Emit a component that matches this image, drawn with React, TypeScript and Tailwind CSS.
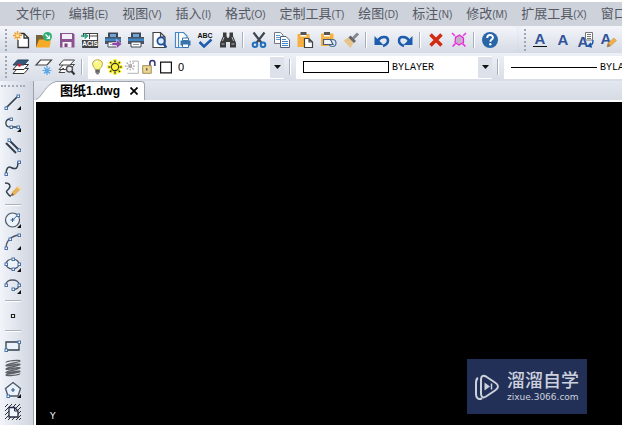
import type { ReactNode } from "react";

const MENUS = [
  { label: "文件", hotkey: "F" },
  { label: "编辑", hotkey: "E" },
  { label: "视图", hotkey: "V" },
  { label: "插入", hotkey: "I" },
  { label: "格式", hotkey: "O" },
  { label: "定制工具", hotkey: "T" },
  { label: "绘图", hotkey: "D" },
  { label: "标注", hotkey: "N" },
  { label: "修改", hotkey: "M" },
  { label: "扩展工具", hotkey: "X" },
  { label: "窗口", hotkey: "W" },
];

type Tool = { name: string; icon: ReactNode; flyout?: boolean };

// ─── Standard toolbar ─────────────────────────────────────────────────────────

const printer = (
  <>
    <path d="M5 2.500h10V7H5z" fill="#3d4654" />
    <path d="M7 4h6v3H7z" fill="#6ea4d8" />
    <path d="M2 7h16v7H2z" fill="#4a5360" />
    <path d="M2 8.500h16v2.500H2z" fill="#3f86c8" />
    <path d="M5 12h10v5H5z" fill="#fff" stroke="#3d4654" />
    <path d="M7 14.500h6" stroke="#8a94a4" />
  </>
);

const FILE_TOOLS: Tool[] = [
  {
    name: "新建",
    icon: (
      <>
        <path d="M7 10v7.500h10.500V8L13 3.500H9.500M13 3.500V8h4.500" fill="#fff" stroke="#333" strokeWidth="1.300" />
        <path d="M6.500 1v9M2 5.500h9M3.500 2.500l6 6M9.500 2.500l-6 6" stroke="#f0a030" strokeWidth="1.300" />
        <circle cx="6.500" cy="5.500" r="1.500" fill="#ffe9a0" />
      </>
    ),
  },
  {
    name: "打开",
    icon: (
      <>
        <path d="M2 17V5h6l2 2h5v10z" fill="#7a6238" />
        <path d="M2 17.500L5 9.500h12l-1.500 8z" fill="#f7a928" />
        <circle cx="13.500" cy="6.500" r="4.500" fill="#2fae74" />
        <path d="M11.500 4.500l4 4M12.500 8.500h3v-3" stroke="#fff" strokeWidth="1.200" fill="none" />
      </>
    ),
  },
  {
    name: "保存",
    icon: (
      <>
        <path d="M3 3h13l1.500 1.500V17.500H3z" fill="#8a5490" />
        <path d="M5 4h10v5H5z" fill="#f4eef6" />
        <path d="M5.500 12h9v5.500h-9z" fill="#f4eef6" />
        <path d="M7.500 13.500h3V17h-3z" fill="#75437d" />
      </>
    ),
  },
  {
    name: "ACIS",
    icon: (
      <>
        <path d="M3.500 7V3.500H17.500V17.500H3V11" fill="#fff" stroke="#444" strokeWidth="1.200" />
        <path d="M9.500 3.500V9M9.500 6h8" stroke="#444" />
        <path d="M1 6h5M4.500 3.500L7.500 6l-3 2.500" stroke="#2a9a78" strokeWidth="1.500" fill="none" />
        <path d="M2 10h16v7.500H2z" fill="#444" />
        <text x="10" y="16.200" fontSize="6.500" fontWeight="700" textAnchor="middle" fill="#fff">ACIS</text>
      </>
    ),
  },
  {
    name: "批量打印",
    icon: (
      <>
        {printer}
        <path d="M9 12.500h4.500v-3l5.500 4.500-5.500 4.500v-3H9z" fill="#8d49a8" stroke="#fff" strokeWidth=".5" />
      </>
    ),
  },
  { name: "打印", icon: printer },
  {
    name: "打印预览",
    icon: (
      <>
        <path d="M4 2.500h7.500L16 7v10.500H4zM11.500 2.500V7H16" fill="#fff" stroke="#444" strokeWidth="1.200" />
        <circle cx="12" cy="11" r="3.600" fill="#dcecff" stroke="#1e4f9c" strokeWidth="1.800" />
        <path d="M14.500 14l3 3.500" stroke="#1e4f9c" strokeWidth="2" />
      </>
    ),
  },
  {
    name: "页面设置",
    icon: (
      <>
        <path d="M3.500 2.500h8L15 6v11.500H3.500zM6.500 2.500v15" fill="#fff" stroke="#4788c0" strokeWidth="1.200" />
        <path d="M8.500 10.500h10v5h-10z" fill="#3974ad" />
        <path d="M10.500 8h6v2.500h-6zM10.500 14h6v3.500h-6z" fill="#fff" stroke="#3974ad" />
      </>
    ),
  },
  {
    name: "拼写检查",
    icon: (
      <>
        <text x="10" y="8" fontSize="7" fontWeight="700" textAnchor="middle" fill="#111">ABC</text>
        <path d="M4.500 12l4.500 4.500 7.500-7" stroke="#1d5cad" strokeWidth="2.500" fill="none" />
      </>
    ),
  },
  {
    name: "查找",
    icon: (
      <>
        <path d="M5 2.500h3.500V6l1 2h1l1-2V2.500H15V6l3 7v4.500h-6V12H8v5.500H2V13l3-7z" fill="#3b3b3b" />
        <path d="M3.500 14h3M13.500 14h3M6 7l-1.500 4M14 7l1.500 4" stroke="#b5b8bd" />
      </>
    ),
  },
];

const EDIT_TOOLS: Tool[] = [
  {
    name: "剪切",
    icon: (
      <>
        <path d="M4.500 2.500l8.500 11M15.500 2.500L7 13.500" stroke="#3e4854" strokeWidth="2.200" />
        <circle cx="6" cy="14.800" r="2.300" fill="none" stroke="#2170bd" strokeWidth="2" />
        <circle cx="14" cy="14.800" r="2.300" fill="none" stroke="#2170bd" strokeWidth="2" />
      </>
    ),
  },
  {
    name: "复制",
    icon: (
      <>
        <path d="M2.500 2.500h6L11 5v8.500H2.500z" fill="#fff" stroke="#6c7889" />
        <path d="M4 5.500h4M4 7.500h5M4 9.500h5" stroke="#5c99d0" />
        <path d="M8.500 6.500H14L17.500 10v7.500h-9z" fill="#fff" stroke="#51607a" />
        <path d="M10 9.500h4M10 11.500h6M10 13.500h6M10 15.500h6" stroke="#3f87c7" />
      </>
    ),
  },
  {
    name: "粘贴",
    icon: (
      <>
        <path d="M2.500 4h12v13h-12z" fill="#f6b040" />
        <path d="M5.500 2h6v3h-6z" fill="#555" />
        <path d="M5.500 5h6v1.500h-6z" fill="#fff" />
        <path d="M9.500 8.500h4.500l3.500 3.500v5.500h-8zM14 8.500V12h3.500" fill="#fff" stroke="#444" strokeWidth="1.200" />
      </>
    ),
  },
  {
    name: "粘贴为块",
    icon: (
      <>
        <path d="M3 3.500h12.500V16H3z" fill="#f6b040" />
        <path d="M6 2h6v3H6z" fill="#555" />
        <path d="M6 5h6v1.500H6z" fill="#fff" />
        <circle cx="14.500" cy="13" r="3.500" fill="#d9e8f8" stroke="#4c6e9b" strokeWidth="1.200" />
        <path d="M5.500 9.500h7l2.500 5H5.500z" fill="#eef4fb" stroke="#4c5b78" strokeWidth="1.200" />
      </>
    ),
  },
  {
    name: "特性匹配",
    icon: (
      <>
        <path d="M2.500 10.500L8 7l5 5-3.500 6z" fill="#e8c48d" />
        <path d="M7.500 7.500l2-2 5.500 5.500-2 2z" fill="#62666c" />
        <path d="M12 8.500l5-5" stroke="#85898e" strokeWidth="3" />
      </>
    ),
  },
];

const UNDO_TOOLS: Tool[] = [
  {
    name: "撤销",
    icon: (
      <>
        <path d="M6 10.500C9 5.500 16 6 16 10.500c0 3-2 4.500-5 5.500" stroke="#1d5cad" strokeWidth="2.500" fill="none" />
        <path d="M2.500 6v9h9z" fill="#1d5cad" />
      </>
    ),
  },
  {
    name: "重做",
    icon: (
      <>
        <path d="M14 10.500C11 5.500 4 6 4 10.500c0 3 2 4.500 5 5.500" stroke="#1d5cad" strokeWidth="2.500" fill="none" />
        <path d="M17.500 6v9h-9z" fill="#1d5cad" />
      </>
    ),
  },
];

const ERASE_TOOLS: Tool[] = [
  {
    name: "删除",
    icon: <path d="M4.500 4.500l11 11M15.500 4.500l-11 11" stroke="#d42a10" strokeWidth="3.500" />,
  },
  {
    name: "清理",
    icon: (
      <>
        <path d="M3 3l14 14M17 3L3 17" stroke="#f02ce0" strokeWidth="1.500" strokeDasharray="4 1" />
        <path d="M6.500 7.500l4-2.500 4 3v4.500L10 15l-4-2.500z" fill="#d3a7d3" stroke="#e02ad0" strokeWidth="1.200" />
        <circle cx="10" cy="10" r="2" fill="#b9b4be" />
      </>
    ),
  },
];

const HELP_TOOLS: Tool[] = [
  {
    name: "帮助",
    icon: (
      <>
        <circle cx="10" cy="10" r="8" fill="#2866a8" />
        <path d="M7.200 8c0-4 5.800-3.700 5.800-.5 0 2-2.700 2.200-2.700 4.300" stroke="#fff" strokeWidth="1.900" fill="none" />
        <circle cx="10.300" cy="14.300" r="1.200" fill="#fff" />
      </>
    ),
  },
];

const TEXT_TOOLS: Tool[] = [
  {
    name: "多行文字",
    icon: (
      <>
        <text x="10" y="14" fontSize="15" fontWeight="700" textAnchor="middle" fill="#30539a">A</text>
        <path d="M3 16.500h14" stroke="#111" />
      </>
    ),
  },
  {
    name: "单行文字",
    icon: <text x="10" y="14.500" fontSize="15" fontWeight="700" textAnchor="middle" fill="#30539a">A</text>,
  },
  {
    name: "文字对齐",
    icon: (
      <>
        <text x="7" y="17" fontSize="15" fontWeight="700" textAnchor="middle" fill="#30539a">A</text>
        <path d="M9.500 2.500h7V10h-7z" fill="#fff" stroke="#777" />
        <path d="M11 4.500h4M11 6.500h4M11 8.500h4" stroke="#777" />
        <path d="M17 10c0 4-1 5-4 6M15 13l-3 3 4 1" stroke="#1e56a5" strokeWidth="1.400" fill="none" />
      </>
    ),
  },
  {
    name: "编辑文字",
    icon: (
      <>
        <text x="7" y="14" fontSize="15" fontWeight="700" textAnchor="middle" fill="#30539a">A</text>
        <path d="M8 17l1-4 6-5 2.500 2.500-6 5.500z" fill="#efb04b" stroke="#c98d35" strokeWidth=".5" />
        <path d="M8 17l1-4 2.500 3z" fill="#8b7760" />
      </>
    ),
  },
];

// ─── Layer toolbar ────────────────────────────────────────────────────────────

const LAYER_TOOLS: Tool[] = [
  {
    name: "图层特性",
    icon: (
      <>
        <path d="M6.500 11.500h11L13 16.500H2z" fill="#fff" stroke="#333" />
        <path d="M6.500 7.500h11l-4.500 5H2z" fill="#fff" stroke="#333" />
        <path d="M6.500 3h11L13 8H2z" fill="#33597f" stroke="#29455f" />
        <circle cx="8.500" cy="8" r="1.800" fill="#d52332" />
      </>
    ),
  },
  {
    name: "图层状态",
    icon: (
      <>
        <path d="M6.500 3h11L13 8H2z" fill="#fff" stroke="#444" strokeWidth="1.200" />
        <path d="M13 9v9M8.500 13.500h9M10 10.500l6 6M16 10.500l-6 6" stroke="#5ba7e6" strokeWidth="1.200" />
      </>
    ),
  },
  {
    name: "图层浏览",
    icon: (
      <>
        <path d="M7 11.500H5.500L2 15.500h6M6.500 7.500h11L13 12.500H2z" fill="#fff" stroke="#444" />
        <path d="M6.500 3h11L13 8H2z" fill="#fff" stroke="#444" />
        <circle cx="12.500" cy="12" r="3" fill="#e8edf4" stroke="#555" strokeWidth="1.400" />
        <path d="M14.500 14l3 3.500" stroke="#333" strokeWidth="2" />
      </>
    ),
  },
];

const LAYER_FLAGS: Tool[] = [
  {
    name: "开",
    icon: (
      <>
        <path d="M7 13c0-2-3-3-3-6.500C4 .5 15 .5 15 6.500c0 3.500-3 4.500-3 6.500z" fill="#fbf583" stroke="#aaa23a" />
        <path d="M7.500 6c0-2 1-2.500 2-2.500" stroke="#fff" strokeWidth="1.500" fill="none" />
        <path d="M7 13h5v3.500H7z" fill="#65656a" />
        <path d="M8 17.500h3" stroke="#333" />
      </>
    ),
  },
  {
    name: "解冻",
    icon: (
      <>
        <path d="M10 1.500v17M1.500 10h17M4 4l12 12M16 4L4 16" stroke="#f9f01a" strokeWidth="4" />
        <path d="M10 2.500v2.500M10 15v2.500M2.500 10H5M15 10h2.500M4.500 4.500L6 6M14 14l1.500 1.500M15.500 4.500L14 6M6 14l-1.500 1.500" stroke="#222" strokeWidth="1.200" />
        <circle cx="10" cy="10" r="4" fill="#fdf23c" stroke="#333" strokeWidth="1.200" />
      </>
    ),
  },
  {
    name: "视口冻结",
    icon: (
      <>
        <path d="M10 3.500h7V17H5" stroke="#aaa" fill="none" />
        <path d="M8 3v12M2 9h12M4 5l8 8M12 5l-8 8" stroke="#a5a5a5" strokeWidth="1.200" strokeDasharray="2 1" />
      </>
    ),
  },
  {
    name: "解锁",
    icon: (
      <>
        <path d="M11 9V5.500C11 2 16.500 2 16.500 5.500V9" stroke="#33337a" strokeWidth="1.700" fill="none" />
        <path d="M3 8.500h9.500V17H3z" fill="#ead696" stroke="#9a8647" />
        <path d="M7.500 11.500v2.500" stroke="#5d4d25" strokeWidth="1.500" />
      </>
    ),
  },
  { name: "颜色", icon: <path d="M4 4.500h12V16.500H4z" fill="#fff" stroke="#111" strokeWidth="1.300" /> },
];

// ─── Draw toolbar ─────────────────────────────────────────────────────────────

const DRAW_GROUPS: Tool[][] = [
  [
    {
      name: "直线",
      flyout: true,
      icon: (
        <>
          <path d="M3 16L15 4" stroke="#333f50" strokeWidth="1.700" />
          <Grip x={3} y={16} />
          <Grip x={15} y={4} />
        </>
      ),
    },
    {
      name: "多段线",
      flyout: true,
      icon: (
        <>
          <path d="M7 5C1.500 5 1.500 13 7 13h8" stroke="#333f50" strokeWidth="1.300" fill="none" />
          <Grip x={8} y={5} />
          <Grip x={8} y={13} />
          <Grip x={15} y={13} />
        </>
      ),
    },
    {
      name: "双线",
      icon: (
        <>
          <path d="M6 4l10 10M3 7l10 10" stroke="#333f50" strokeWidth="1.900" />
          <Grip x={6} y={4} />
          <Grip x={16} y={14} />
        </>
      ),
    },
    {
      name: "样条曲线",
      icon: (
        <>
          <path d="M3 16c0-5 2-8 5-6.500 5 2.500 7 1 7-6" stroke="#333f50" strokeWidth="1.500" fill="none" />
          <Grip x={3} y={16} />
          <Grip x={16} y={4} />
        </>
      ),
    },
    {
      name: "徒手画",
      icon: (
        <>
          <path d="M2 3c5 0 6 3 4 5.500S2 11 5 14c1 1 1 2 3 2" stroke="#333f50" strokeWidth="1.500" fill="none" />
          <path d="M8 16l1-4 6-6 3 3-6 6z" fill="#e5b35b" />
          <path d="M14 7l1.500-1.500 3 3L17 10z" fill="#f1d9b0" />
          <path d="M8 16l1-3 2 2z" fill="#5e5140" />
        </>
      ),
    },
  ],
  [
    {
      name: "圆",
      flyout: true,
      icon: (
        <>
          <circle cx="9.500" cy="10" r="7" fill="#edf3fb" stroke="#4a5566" strokeWidth="1.200" />
          <path d="M9.500 10L15 5M7.500 10h4M9.500 8v4" stroke="#3a5f92" />
          <Grip x={15} y={5} />
        </>
      ),
    },
    {
      name: "圆弧",
      flyout: true,
      icon: (
        <>
          <path d="M3 16C3 9 8 4 16 3" stroke="#4a5566" strokeWidth="1.300" fill="none" />
          <Grip x={3} y={16} />
          <Grip x={7} y={7} />
          <Grip x={16} y={3} />
        </>
      ),
    },
    {
      name: "椭圆",
      flyout: true,
      icon: (
        <>
          <ellipse cx="9.500" cy="10" rx="6.500" ry="5" fill="#edf3fb" stroke="#4a5566" strokeWidth="1.200" />
          <Grip x={3} y={10} />
          <Grip x={16} y={10} />
          <Grip x={10} y={5} />
          <Grip x={10} y={15} />
        </>
      ),
    },
    {
      name: "椭圆弧",
      flyout: true,
      icon: (
        <>
          <path d="M3 8.500c0-6 13-6 13 0 0 4-3 5-6 5" stroke="#4a5566" strokeWidth="1.300" fill="none" />
          <Grip x={3} y={9} />
          <Grip x={16} y={9} />
          <Grip x={10} y={13} />
        </>
      ),
    },
  ],
  [{ name: "点", icon: <path d="M8.500 8.500h3v3h-3z" fill="#fff" stroke="#222" strokeWidth="1.200" /> }],
  [
    {
      name: "矩形",
      icon: (
        <>
          <path d="M3 6h13v8H3z" fill="#eaf2fc" stroke="#333f50" strokeWidth="1.300" />
          <Grip x={3} y={14} />
          <Grip x={16} y={6} />
        </>
      ),
    },
    {
      name: "螺旋",
      icon: (
        <>
          <path
            d="M3 4.500C3 3 17 1.500 17 3S3 6 3 7.500 17 5 17 6.500 3 9.500 3 11 17 8.500 17 10 3 13 3 14.500 17 12 17 13.500 3 15.500 3 17s14 0 14-1.500"
            stroke="#5d6066"
            strokeWidth="1.300"
            fill="none"
          />
        </>
      ),
    },
    {
      name: "正多边形",
      flyout: true,
      icon: (
        <>
          <path d="M10 2.500L17.500 8.500 15 16H5L2.500 8.500z" fill="#eaf2fc" stroke="#4a5566" strokeWidth="1.300" />
          <path d="M8 10h4M10 8v4" stroke="#3a5f92" strokeWidth="1.200" />
          <Grip x={5} y={16} />
        </>
      ),
    },
    {
      name: "图案填充",
      icon: (
        <>
          <path d="M2 5l3-3M2 9l7-7M2 13L13 2M2 17L17 2M5 18L18 5M9 18l9-9M13 18l5-5M16 18l2-2" stroke="#333" />
          <path d="M6 5.500h5.500L15 9v6H6z" fill="#f0f6ff" stroke="#222c44" strokeWidth="1.300" />
          <path d="M11.500 5.500V9H15" stroke="#222c44" />
        </>
      ),
    },
  ],
];

export default function App() {
  return (
    <div className="flex min-h-screen w-full flex-col overflow-hidden bg-[#dce0e9] font-['Liberation_Sans','Noto_Sans_CJK_SC',sans-serif]">
      <nav className="flex h-[26px] shrink-0 items-center gap-3.5 overflow-hidden border-t-2 border-white bg-[#ced2db] pl-4 text-[#545963]">
        {MENUS.map((menu) => (
          <button key={menu.label} type="button" className="flex shrink-0 items-baseline whitespace-nowrap text-[13px] leading-5">
            {menu.label}
            <span className="text-[10px]">({menu.hotkey})</span>
          </button>
        ))}
      </nav>

      <div className="flex h-[27px] shrink-0 items-center overflow-hidden bg-linear-to-b from-[#eef1f7] to-[#d3d8e3]">
        <div className="flex h-full shrink-0 items-center rounded-r-md bg-linear-to-b from-[#f4f6fa] to-[#d5dae5] pr-4">
          <Handle />
          <ToolGroup tools={FILE_TOOLS} />
          <Divider />
          <ToolGroup tools={EDIT_TOOLS} />
          <Divider />
          <ToolGroup tools={UNDO_TOOLS} />
          <Divider />
          <ToolGroup tools={ERASE_TOOLS} />
          <Divider />
          <ToolGroup tools={HELP_TOOLS} />
        </div>
        <div className="ml-0.5 flex h-full flex-1 items-center rounded-l-md bg-linear-to-b from-[#f4f6fa] to-[#d5dae5]">
          <Handle />
          <ToolGroup tools={TEXT_TOOLS} />
        </div>
      </div>

      <div className="flex h-7 shrink-0 items-center overflow-hidden bg-linear-to-b from-[#edf0f6] to-[#d8dde7]">
        <Handle />
        <ToolGroup tools={LAYER_TOOLS} />
        <Divider />
        <Combo label="图层" value="0" valueClass="pl-1 text-[11px]">
          <div className="flex pl-px">
            {LAYER_FLAGS.map((flag) => (
              <span key={flag.name} className="flex w-[17px] justify-center">
                <Icon small>{flag.icon}</Icon>
              </span>
            ))}
          </div>
        </Combo>
        <Divider />
        <Combo label="颜色控制" value="BYLAYER" valueClass="pl-[3px] font-['Liberation_Mono',monospace] text-[10px]">
          <span className="ml-[7px] h-3 w-[86px] shrink-0 border border-black" />
        </Combo>
        <Divider />
        <Combo label="线型控制" value="BYLAYER" valueClass="pl-[3px] font-['Liberation_Mono',monospace] text-[10px]">
          <span className="ml-[7px] h-px w-[86px] shrink-0 bg-black" />
        </Combo>
      </div>

      <div className="flex flex-1">
        <aside className="flex w-[34px] shrink-0 flex-col items-center border-r border-[#9ba1ad] bg-linear-to-r from-[#f1f4f9] to-[#d0d5e0] pt-1 pr-2">
          <span className="mb-1 w-6 border-t-2 border-dotted border-[#a5abb7]" />
          {DRAW_GROUPS.map((group, i) => (
            <div key={i} className="flex flex-col items-center">
              {i > 0 && <span className="my-[3px] h-0.5 w-4 border-t border-b border-t-[#a9afbb] border-b-white" />}
              {group.map((tool) => (
                <button
                  key={tool.name}
                  type="button"
                  aria-label={tool.name}
                  className="flex h-[22px] w-6 items-center justify-center"
                >
                  <Icon>
                    {tool.icon}
                    {tool.flyout && <path d="M18 14v4h-4z" fill="#111" />}
                  </Icon>
                </button>
              ))}
            </div>
          ))}
        </aside>

        <main className="flex min-w-0 flex-1 flex-col">
          <div className="flex h-[19px] shrink-0 bg-linear-to-b from-[#e3e7ef] to-[#d6dbe5] pl-0.5">
            <svg className="h-[19px] w-5 shrink-0" viewBox="0 0 20 19" aria-hidden="true">
              <path d="M0 19C6 17 10 3 20 1V19z" fill="#fff" />
              <path d="M0 18.500C6 16.500 10 2.500 20 .5" fill="none" stroke="#a0a6b2" />
            </svg>
            <div className="flex items-center gap-2 rounded-tr border-t border-r border-[#a0a6b2] bg-white pr-1 pl-1">
              <span className="text-[13px] leading-4 font-bold whitespace-nowrap text-black">
                图纸<span className="text-[12px]">1.dwg</span>
              </span>
              <button type="button" aria-label="关闭" className="flex h-4 w-3 items-center justify-center">
                <svg className="size-2" viewBox="0 0 8 8" aria-hidden="true">
                  <path d="M.5.5l7 7M7.500.5l-7 7" stroke="#000" strokeWidth="1.700" />
                </svg>
              </button>
            </div>
          </div>

          <div className="flex flex-1 items-end justify-between border-t-2 border-l-2 border-white bg-black pr-[35px] pl-3.5">
            <span className="pb-[3px] font-['DejaVu_Sans',sans-serif] text-[9px] leading-3 text-white">Y</span>
            <Watermark />
          </div>
        </main>
      </div>
    </div>
  );
}

// ─── Parts ────────────────────────────────────────────────────────────────────

function Icon({ children, small }: { children: ReactNode; small?: boolean }) {
  return (
    <svg className={small ? "size-[18px] shrink-0" : "size-5 shrink-0"} viewBox="0 0 20 20" fill="none" aria-hidden="true">
      {children}
    </svg>
  );
}

function Grip({ x, y }: { x: number; y: number }) {
  return <rect x={x - 1} y={y - 1} width="2.500" height="2.500" fill="#fff" stroke="#4a73a8" strokeWidth="1" />;
}

function ToolGroup({ tools }: { tools: Tool[] }) {
  return (
    <div className="flex shrink-0">
      {tools.map((tool) => (
        <button key={tool.name} type="button" aria-label={tool.name} className="flex h-6 w-[23px] items-center justify-center">
          <Icon>{tool.icon}</Icon>
        </button>
      ))}
    </div>
  );
}

function Handle() {
  return <span className="mr-0.5 ml-[5px] h-[22px] shrink-0 border-l-2 border-dotted border-[#9fa5b2]" />;
}

function Divider() {
  return <span className="mx-[3px] h-4 w-0.5 shrink-0 border-r border-l border-r-white border-l-[#a9afbb]" />;
}

function Combo({
  label,
  value,
  valueClass,
  children,
}: {
  label: string;
  value: string;
  valueClass: string;
  children: ReactNode;
}) {
  return (
    <div className="relative mx-0.5 flex h-[23px] w-[196px] shrink-0 items-center bg-white">
      {children}
      <select aria-label={label} className={`h-full min-w-0 flex-1 appearance-none bg-transparent text-black ${valueClass}`}>
        <option>{value}</option>
      </select>
      <span className="pointer-events-none absolute inset-y-px right-0 flex w-3.5 items-center justify-center bg-[#dde1ea]">
        <svg className="h-1 w-[7px]" viewBox="0 0 7 4" aria-hidden="true">
          <path d="M0 0h7L3.500 4z" fill="#111" />
        </svg>
      </span>
    </div>
  );
}

function Watermark() {
  return (
    <div className="mb-[11px] flex h-[55px] w-[120px] items-center gap-2 bg-[#223057] pl-2 text-[#ccd1dd]">
      <svg className="h-7 w-6 shrink-0" viewBox="0 0 24 28" fill="none" aria-hidden="true">
        <path
          d="M6 6.500C6 3 8 2 11 3.500l9 6c4 2.500 4 5.500 0 8l-9 6c-3 2-5 .5-5-3z"
          stroke="currentColor"
          strokeWidth="2"
        />
        <path d="M3 5c-2 1-2 3-2 5v11c0 4 2 6 6 4.500" stroke="currentColor" strokeWidth="2" />
        <path d="M9.500 9.500v8l5.500-4z" fill="currentColor" />
        <path d="M16.500 10.500v6" stroke="currentColor" strokeWidth="1.500" />
      </svg>
      <div className="flex flex-col whitespace-nowrap">
        <span className="text-[18px] leading-5 font-medium">溜溜自学</span>
        <span className="font-['DejaVu_Sans',sans-serif] text-[9px] leading-3">zixue.3066.com</span>
      </div>
    </div>
  );
}
